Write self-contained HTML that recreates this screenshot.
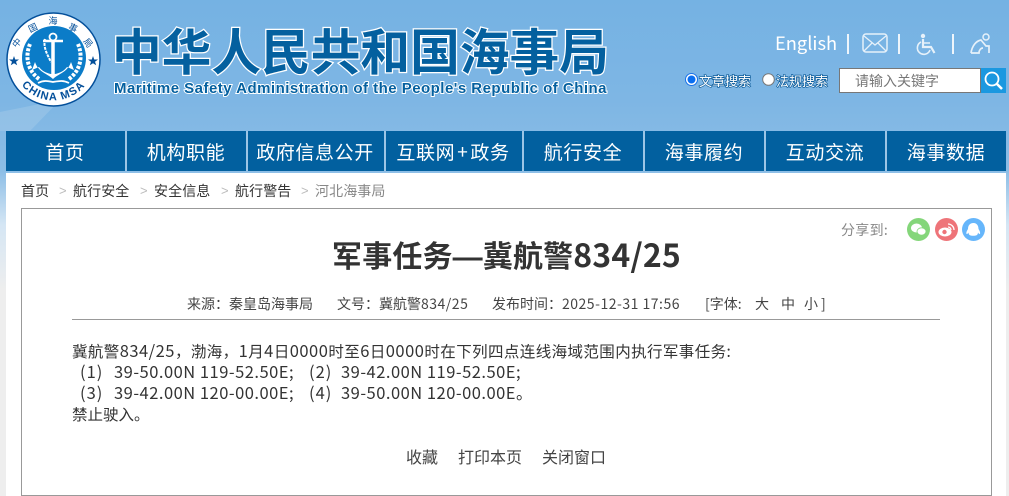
<!DOCTYPE html>
<html lang="zh"><head><meta charset="utf-8"><title>军事任务—冀航警834/25</title>
<style>
*{box-sizing:border-box;margin:0;padding:0}
html,body{width:1009px;height:496px;overflow:hidden}
body{position:relative;background:linear-gradient(#75b2e3 0,#7eb6e4 100px,#8bbde6 170px,#d5e6f4 225px,#eeeeee 290px);font-family:"Noto Sans CJK SC","Liberation Sans",sans-serif;color:#333}
.a{position:absolute;white-space:nowrap}
.title{left:112px;top:14px;font-size:49.7px;line-height:70px;font-weight:700;color:#04609f;-webkit-text-stroke:2.5px #fff;paint-order:stroke fill}
.en{left:114px;top:80px;font:bold 15px/18px "Liberation Sans",sans-serif;color:#04609f;-webkit-text-stroke:2px #fff;paint-order:stroke fill;letter-spacing:.48px}
.nav{left:6px;top:131px;width:1000px;height:40px;background:#02609f}
.nav i{position:absolute;top:0;width:2px;height:40px;background:#9cc5e6}
.nav b{position:absolute;top:0;font-weight:400;font-size:19px;line-height:41px;color:#fff;transform:translateX(-50%);white-space:nowrap;letter-spacing:.6px}
.wrap{left:6px;top:173px;width:1000px;height:323px;background:#fff}
.crumb{top:182px;font-size:14px;line-height:18px;color:#333;letter-spacing:.1px}
.sep{top:182px;font-size:13px;line-height:18px;color:#bbb;font-family:"Liberation Sans",sans-serif}
.box{left:21px;top:208px;width:971px;height:288px;border:1px solid #999}
.h1{left:21px;width:971px;text-align:center;top:234px;font-size:30px;line-height:40px;font-weight:700;color:#333;letter-spacing:.15px}
.h1 span{font-size:32px}
.h1 u{text-decoration:none;font-family:"Liberation Sans",sans-serif}
.meta{top:295px;font-size:14px;line-height:18px;color:#444}
.rule{left:72px;top:319px;width:868px;height:1px;background:#999}
.p{left:72px;font-size:15.5px;line-height:22px;color:#333;letter-spacing:.4px}
.n{font-size:16.5px;letter-spacing:.5px}
.q{position:absolute;font-size:16.5px;line-height:22px;color:#333;letter-spacing:.5px;white-space:nowrap}
.btm{top:446px;font-size:16px;line-height:20px;color:#444}
.dot{position:absolute;top:218px;width:23px;height:23px;border-radius:50%}
.s{font-size:13px;line-height:16px;color:#fff;-webkit-text-stroke:1.4px #0e5d9b;paint-order:stroke fill}
</style></head><body>
<svg class="a" style="left:0;top:100px" width="130" height="40"><path d="M0 12 L60 0 L30 31 L0 31Z" fill="#a6cbe9" opacity=".45"/></svg>

<svg class="a" style="left:6px;top:12px" width="96" height="96" viewBox="0 0 96 96">
<circle cx="47.500" cy="47.500" r="46.500" fill="#fff" stroke="#034f9a" stroke-width="1.500"/>
<circle cx="48" cy="46" r="32" fill="#0b7cc8"/>
<path d="M24 32c-5 12-3 26 9 35M72 32c5 12 3 26-9 35" fill="none" stroke="#fff" stroke-width="4" stroke-dasharray="3 1.500"/>
<circle cx="47" cy="25" r="3.500" fill="none" stroke="#fff" stroke-width="1.800"/>
<path d="M37 29H57" stroke="#fff" stroke-width="2.500"/><path d="M47 29V62" stroke="#fff" stroke-width="3.500"/>
<path d="M29 50C32 60 42 62 47 67 52 62 62 60 65 50L68 58 61 55C58 59 54 61 49 62H45C40 61 36 59 33 55L26 58Z" fill="#fff"/>
<path d="M39 27c-2 8 2 15 6 23" fill="none" stroke="#fff" stroke-width="2" stroke-dasharray="3 1"/>
<path d="M32 71C38 68 42 69 47 70 53 69 57 68 63 71" fill="none" stroke="#fff" stroke-width="1.800"/>
<g font-family="'Noto Sans CJK SC',sans-serif" font-size="9" fill="#034f9a" text-anchor="middle">
<text x="11" y="34" transform="rotate(-50 11 31)">中</text>
<text x="27" y="19" transform="rotate(-25 27 16)">国</text>
<text x="47" y="12">海</text>
<text x="67" y="19" transform="rotate(25 67 16)">事</text>
<text x="82" y="34" transform="rotate(50 82 31)">局</text>
</g>
<path id="sb" d="M8.500 60A41 41 0 0 0 86.500 60" fill="none"/>
<text font-family="'Liberation Sans',sans-serif" font-weight="700" font-size="11" fill="#034f9a" letter-spacing="1.200" text-anchor="middle"><textPath href="#sb" startOffset="50%">CHINA MSA</textPath></text>
<path d="M8 44l1.200 3.500H13l-3 2.200 1.200 3.600L8 51.200l-3.200 2.100L6 49.700l-3-2.200h3.800ZM87 44l1.200 3.500H92l-3 2.200 1.200 3.600L87 51.200l-3.200 2.100 1.200-3.600-3-2.200h3.800Z" fill="#034f9a"/>
</svg>

<div class="a title">中华人民共和国海事局</div>
<div class="a en">Maritime Safety Administration of the People's Republic of China</div>

<div class="a" style="left:775px;top:31px;font:18.3px/25px 'Noto Sans CJK SC',sans-serif;color:#fff">English</div>
<svg class="a" style="left:840px;top:30px" width="165" height="30" fill="none" stroke="#fff">
<path d="M8 4v20M59 4v20M113 4v20" stroke-width="2" stroke="#eef5fb"/>
<rect x="23" y="4" width="24" height="18" rx="3" stroke-width="1.500" stroke="#e6f1fa"/><path d="M24 6l11 9 11-9M24 21l8-8M46 21l-8-8" stroke-width="1.300" stroke="#e6f1fa"/>
<circle cx="83" cy="6" r="2.200" fill="#e6f1fa" stroke="none"/><path d="M83 9v8h8l3.500 6" stroke-width="2.200" stroke="#e6f1fa"/><path d="M83 13h7M81 12a6.500 6.500 0 1 0 9 8" stroke-width="1.600" stroke="#e6f1fa"/>
<circle cx="146" cy="7" r="3" stroke-width="1.500" stroke="#e6f1fa"/><path d="M131 23c1-7 5-12 10-13l5 6h3v7M131 23h8c0-3 2-5 4-5" stroke-width="1.700" stroke="#e6f1fa"/>
</svg>

<svg class="a" style="left:685px;top:73px" width="14" height="14"><circle cx="6.500" cy="6.500" r="6" fill="#fff" stroke="#1a73e8"/><circle cx="6.500" cy="6.500" r="4" fill="#0b6ff0"/></svg>
<div class="a s" style="left:699px;top:73px">文章搜索</div>
<svg class="a" style="left:762px;top:73px" width="14" height="14"><circle cx="6.500" cy="6.500" r="5.800" fill="#fff" stroke="#777"/></svg>
<div class="a s" style="left:776px;top:73px">法规搜索</div>
<div class="a" style="left:839px;top:68px;width:142px;height:25px;background:#fff;border:1px solid #777;font-size:14px;line-height:24px;color:#777;padding-left:15px">请输入关键字</div>
<div class="a" style="left:981px;top:68px;width:25px;height:25px;background:#1b98e0"></div>
<svg class="a" style="left:981px;top:68px" width="25" height="25" fill="none" stroke="#fff"><circle cx="11" cy="11" r="6.500" stroke-width="1.800"/><path d="M16 16l5 5" stroke-width="2.600"/></svg>

<div class="a nav">
<b style="left:59px">首页</b><i style="left:119px"></i>
<b style="left:180px">机构职能</b><i style="left:240px"></i>
<b style="left:309px">政府信息公开</b><i style="left:378px"></i>
<b style="left:447px">互联网<span style="margin:0 2px">+</span>政务</b><i style="left:516px"></i>
<b style="left:577px">航行安全</b><i style="left:637px"></i>
<b style="left:698px">海事履约</b><i style="left:758px"></i>
<b style="left:819px">互动交流</b><i style="left:879px"></i>
<b style="left:940px">海事数据</b>
</div>
<div class="a wrap"></div>

<div class="a crumb" style="left:21px">首页</div><div class="a sep" style="left:59px">&gt;</div>
<div class="a crumb" style="left:73px">航行安全</div><div class="a sep" style="left:140px">&gt;</div>
<div class="a crumb" style="left:154px">安全信息</div><div class="a sep" style="left:221px">&gt;</div>
<div class="a crumb" style="left:235px">航行警告</div><div class="a sep" style="left:301px">&gt;</div>
<div class="a crumb" style="left:315px;color:#888">河北海事局</div>

<div class="a box"></div>
<div class="a" style="left:841px;top:221px;font-size:14px;line-height:18px;color:#888;letter-spacing:.3px">分享到:</div>
<div class="dot" style="left:907px;background:#84d67a"></div>
<div class="dot" style="left:935px;background:#ee7479"></div>
<div class="dot" style="left:962px;background:#66b6fb"></div>
<svg class="a" style="left:907px;top:218px" width="78" height="23" fill="#fff">
<ellipse cx="9.500" cy="10" rx="5.500" ry="4.500"/><ellipse cx="14.500" cy="13.500" rx="4.500" ry="3.700" stroke="#84d67a" stroke-width=".8"/>
<ellipse cx="38" cy="14" rx="6.500" ry="4.500"/><circle cx="37.500" cy="14" r="2.200" fill="#ee7479"/>
<path d="M41 6a6 6 0 0 1 6 6M41 9a3 3 0 0 1 3 3" fill="none" stroke="#fff" stroke-width="1.300"/>
<path d="M66.500 5c3.500 0 5 3 5 6 1 1.500 2 3.500 1.500 5-1 0-1.500-.5-2-1.500 0 1-.5 2-1 2.500-2 1-5.500 1-7.500 0-.5-.5-1-1.500-1-2.500-.5 1-1 1.500-2 1.500-.5-1.500.5-3.500 1.500-5 0-3 1.500-6 5.500-6Z"/>
</svg>

<div class="a h1">军事任务<u>—</u>冀航警<span>834/25</span></div>
<div class="a meta" style="left:187px">来源：秦皇岛海事局</div>
<div class="a meta" style="left:337px">文号：冀航警<span style="letter-spacing:.5px">834/25</span></div>
<div class="a meta" style="left:492px">发布时间：<span style="letter-spacing:.5px">2025-12-31 17:56</span></div>
<div class="a meta" style="left:705px">[字体:</div>
<div class="a meta" style="left:755px">大</div>
<div class="a meta" style="left:781px">中</div>
<div class="a meta" style="left:804px">小</div>
<div class="a meta" style="left:821px">]</div>
<div class="a rule"></div>

<div class="a p" style="top:339px">冀航警<span class="n">834/25</span>，渤海，<span class="n">1</span>月<span class="n">4</span>日<span class="n">0000</span>时至<span class="n">6</span>日<span class="n">0000</span>时在下列四点连线海域范围内执行军事任务:</div>
<div class="q" style="left:80px;top:360px;letter-spacing:1px">(1)</div><div class="q" style="left:114px;top:360px">39-50.00N 119-52.50E;</div>
<div class="q" style="left:309px;top:360px;letter-spacing:1px">(2)</div><div class="q" style="left:341px;top:360px">39-42.00N 119-52.50E;</div>
<div class="q" style="left:80px;top:381px;letter-spacing:1px">(3)</div><div class="q" style="left:114px;top:381px">39-42.00N 120-00.00E;</div>
<div class="q" style="left:309px;top:381px;letter-spacing:1px">(4)</div><div class="q" style="left:341px;top:381px">39-50.00N 120-00.00E。</div>
<div class="a p" style="top:403px;letter-spacing:0">禁止驶入。</div>

<div class="a btm" style="left:406px">收藏</div>
<div class="a btm" style="left:458px">打印本页</div>
<div class="a btm" style="left:542px">关闭窗口</div>
</body></html>
